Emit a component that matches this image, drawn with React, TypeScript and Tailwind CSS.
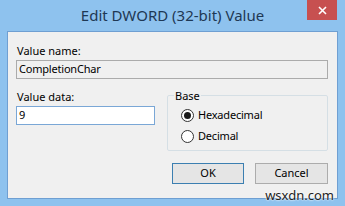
import React from 'react'

function Radio(props: { checked?: boolean; label: string }) {
  const { checked, label } = props
  return (
    <div className="flex h-[21px] items-center">
      <span className="flex h-[13px] w-[13px] items-center justify-center rounded-full border border-[#333333] bg-white">
        {checked && <span className="h-[7px] w-[7px] rounded-full bg-[#1a1a1a]" />}
      </span>
      <span className="ml-[4px] text-[11px] text-black">{label}</span>
    </div>
  )
}

export default function App() {
  return (
    <div className="relative flex h-[206px] w-[345px] flex-col bg-[#8ec2ee] font-['Noto_Sans',sans-serif]">
      <div className="relative flex h-[31px] items-center justify-center">
        <span className="text-[15px] leading-none text-[#1e3854]">Edit DWORD (32-bit) Value</span>
        <button className="absolute right-[8px] top-0 flex h-[20px] w-[30px] items-center justify-center bg-[#c75050]">
          <svg width="9" height="9" viewBox="0 0 9 9" stroke="white" strokeWidth="1.6">
            <path d="M1 1L8 8M8 1L1 8" />
          </svg>
        </button>
      </div>

      <div className="mx-[7px] mb-[7px] flex flex-1 flex-col border border-[#6f9fd2] bg-[#f0f0f0] pl-[8px] pr-[9px] pt-[10px] text-[11px] text-black">
        <div className="h-[17px] pl-[1px] leading-[17px]">Value name:</div>
        <div className="mt-[1px] flex h-[19px] items-center border border-[#ababab] bg-[#f0f0f0] pl-[2px] tracking-[-0.2px]">
          CompletionChar
        </div>

        <div className="mt-[9px] flex">
          <div className="flex w-[139px] flex-col">
            <div className="h-[17px] pl-[1px] leading-[17px]">Value data:</div>
            <div className="mt-[1px] flex h-[19px] items-center border border-[#7aa7d6] bg-white pl-[2px]">9</div>
          </div>
          <fieldset className="ml-[12px] h-[63px] flex-1 rounded-[2px] border border-[#d5dfe5]">
            <legend className="ml-[6px] px-[1px] leading-[15px]">Base</legend>
            <div className="flex flex-col pl-[13px] pt-[2px] tracking-[-0.2px]">
              <Radio checked label="Hexadecimal" />
              <Radio label="Decimal" />
            </div>
          </fieldset>
        </div>

        <div className="mt-[12px] flex justify-end gap-[11px]">
          <button className="flex h-[21px] w-[72px] items-center justify-center border border-[#3c7fb1] bg-[#e5e5e5] text-[11px]">
            OK
          </button>
          <button className="flex h-[21px] w-[73px] items-center justify-center border border-[#acacac] bg-[#e5e5e5] text-[11px]">
            Cancel
          </button>
        </div>
      </div>

      <span className="absolute bottom-[4px] right-[11px] text-[13px] leading-none text-[#222222] [text-shadow:0_0_2px_white,0_0_2px_white]">
        wsxdn.com
      </span>
    </div>
  )
}
